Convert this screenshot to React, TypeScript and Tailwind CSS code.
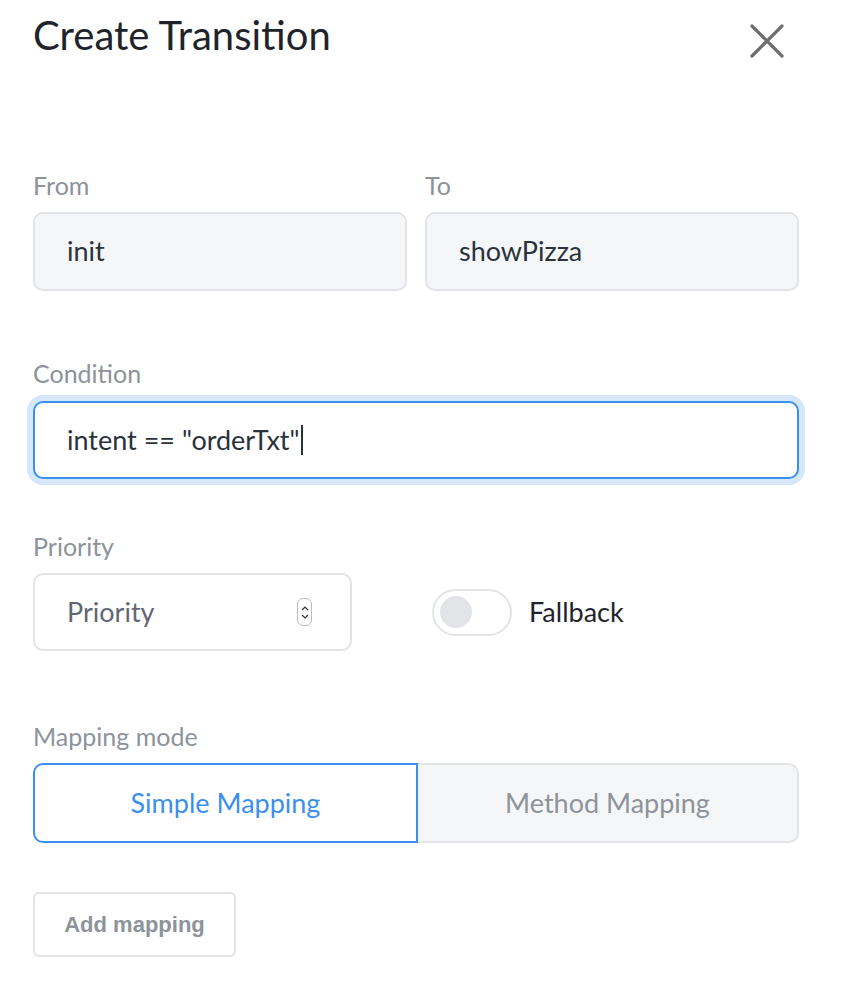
import React from "react";

export default function App() {
  const font = { fontFamily: "Lato, 'Noto Sans', sans-serif" };
  return (
    <div className="w-[854px] h-[1002px] bg-white relative" style={font}>
      <div className="pl-[33px] pr-[55px] pt-[12px]">
        <div className="flex items-start justify-between h-[46px]">
          <h1 className="text-[40px] leading-[46px] text-[#1f242b] font-normal">Create Transition</h1>
          <button className="mt-[12px] mr-[15px] w-[34px] h-[34px] flex items-center justify-center">
            <svg width="34" height="34" viewBox="0 0 34 34">
              <path d="M2 2 L32 32 M32 2 L2 32" stroke="#6e6e70" strokeWidth="3.2" strokeLinecap="round" />
            </svg>
          </button>
        </div>

        <div className="mt-[112px] grid grid-cols-2 gap-[18px]">
          <div>
            <div className="text-[25px] leading-[30px] text-[#8d939a]">From</div>
            <div className="mt-[12px] h-[79px] rounded-[10px] bg-[#f5f6f8] border-2 border-[#e2e4e7] flex items-center pl-[32px] text-[27px] text-[#2a323c]">init</div>
          </div>
          <div>
            <div className="text-[25px] leading-[30px] text-[#8d939a]">To</div>
            <div className="mt-[12px] h-[79px] rounded-[10px] bg-[#f5f6f8] border-2 border-[#e2e4e7] flex items-center pl-[32px] text-[27px] text-[#2a323c]">showPizza</div>
          </div>
        </div>

        <div className="mt-[67px]">
          <div className="text-[25px] leading-[30px] text-[#8d939a]">Condition</div>
          <div className="mt-[13px] h-[78px] rounded-[10px] bg-white border-2 border-[#3a8ff0] ring-[6px] ring-[#d6e7fb] flex items-center pl-[32px] text-[27px] text-[#2a323c]">
            <span>intent == "orderTxt"</span>
            <span className="inline-block w-[2px] h-[30px] bg-[#2a323c] ml-[1px]" />
          </div>
        </div>

        <div className="mt-[52px]">
          <div className="text-[25px] leading-[30px] text-[#8d939a]">Priority</div>
          <div className="mt-[12px] flex items-center">
            <div className="w-[319px] h-[78px] rounded-[10px] bg-white border-2 border-[#e2e4e7] flex items-center justify-between pl-[32px] pr-[38px] text-[27px] text-[#5f6772]">
              <span>Priority</span>
              <div className="w-[15px] h-[28px] rounded-[6px] border border-[#b8bcc2] bg-white flex flex-col items-center justify-center gap-[3px]">
                <svg width="8" height="5" viewBox="0 0 8 5"><path d="M1 4 L4 1 L7 4" fill="none" stroke="#333" strokeWidth="1.2" /></svg>
                <svg width="8" height="5" viewBox="0 0 8 5"><path d="M1 1 L4 4 L7 1" fill="none" stroke="#333" strokeWidth="1.2" /></svg>
              </div>
            </div>
            <div className="ml-[80px] w-[80px] h-[47px] rounded-full border-2 border-[#e2e4e7] bg-white flex items-center pl-[6px]">
              <div className="w-[32px] h-[32px] rounded-full bg-[#e2e4e8]" />
            </div>
            <span className="ml-[17px] text-[27px] text-[#1f242b]">Fallback</span>
          </div>
        </div>

        <div className="mt-[70px]">
          <div className="text-[25px] leading-[30px] text-[#8d939a]">Mapping mode</div>
          <div className="mt-[12px] flex h-[80px]">
            <div className="w-[385px] rounded-l-[10px] border-2 border-[#3a8ff0] bg-white flex items-center justify-center text-[27px] text-[#3a8ff0]">Simple Mapping</div>
            <div className="flex-1 rounded-r-[10px] border-2 border-l-0 border-[#e2e4e7] bg-[#f5f6f8] flex items-center justify-center text-[27px] text-[#8d939a]">Method Mapping</div>
          </div>
        </div>

        <div className="mt-[49px]">
          <button className="w-[203px] h-[65px] rounded-[6px] border-2 border-[#e2e4e7] bg-white text-[22px] font-bold text-[#8d939a]" style={{ fontFamily: "'Liberation Sans', Arial, sans-serif" }}>Add mapping</button>
        </div>
      </div>
    </div>
  );
}
